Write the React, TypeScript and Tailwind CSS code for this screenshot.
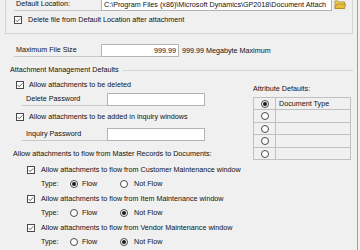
const Check = () => (
  <svg width="8" height="8" viewBox="0 0 8 8" className="block shrink-0">
    <rect x="0.5" y="0.5" width="7" height="7" fill="#fff" stroke="#4a4a4a" />
    <path d="M1.7 4.1 L3.2 5.6 L6.3 2.4" fill="none" stroke="#3a3a3a" strokeWidth="0.8" />
  </svg>
);

const Radio = ({ on }: { on?: boolean }) => (
  <svg width="8" height="8" viewBox="0 0 8 8" className="block shrink-0">
    <circle cx="4" cy="4" r="3.5" fill="#fff" stroke="#4a4a4a" />
    {on && <circle cx="4" cy="4" r="2" fill="#1a1a1a" />}
  </svg>
);

const Folder = () => (
  <svg width="14" height="13" viewBox="0 0 14 13" className="block">
    <rect x="0" y="0" width="14" height="13" fill="#ececec" />
    <path d="M2 4.5 L2 3 L5 3 L6 4 L11.5 4 L11.5 10.5 L2 10.5 Z" fill="#f3d35a" stroke="#a8862a" strokeWidth="0.8" />
    <path d="M2 10.5 L3.5 6 L12.5 6 L11.5 10.5 Z" fill="#e8bd3a" stroke="#a8862a" strokeWidth="0.8" />
  </svg>
);

const CheckRow = ({ label, pl, text }: { label: string; pl: string; text: string }) => (
  <div className={`flex items-center ${pl}`}>
    <Check />
    <span className={text}>{label}</span>
  </div>
);

const TypeRow = ({ flow }: { flow: boolean }) => (
  <div className="flex h-[14px] items-center pl-[41px]">
    <span className="w-[29px]">Type:</span>
    <Radio on={flow} />
    <span className="ml-[4px] w-[38px]">Flow</span>
    <Radio on={!flow} />
    <span className="ml-[6px]">Not Flow</span>
  </div>
);

const App = () => {
  return (
    <div className="flex h-[250px] w-[360px] overflow-hidden bg-[#f0f0f0] font-['Liberation_Sans',Arial,sans-serif] text-[7.2px] leading-none text-[#111]">
      <div className="flex w-[357px] flex-col">
        {/* default location group, top edge is scrolled off */}
        <div className="-mt-[2px] ml-[5px] h-[36px] w-[348px] shrink-0 border-x border-b border-[#d5d5d5]">
          <div className="flex h-[13px] items-stretch pl-[8px]">
            <div className="flex w-[87px] items-center border-b border-[#c8c8c8] pl-[2px]">Default Location:</div>
            <div className="flex w-[231px] items-center overflow-hidden whitespace-nowrap border border-[#b4b4b4] bg-white pl-[2px]">
              C:\Program Files (x86)\Microsoft Dynamics\GP2018\Document Attach
            </div>
            <div className="ml-[1px]">
              <Folder />
            </div>
          </div>
          <div className="mt-[3px] h-[12px]">
            <CheckRow pl="pl-[8px] h-[12px]" text="ml-[6px]" label="Delete file from Default Location after attachment" />
          </div>
        </div>

        <div className="mt-[10px] flex h-[13px] shrink-0 items-stretch pl-[14px]">
          <div className="flex w-[87px] items-center border-b border-[#c8c8c8] pl-[2px]">Maximum File Size</div>
          <div className="flex w-[78px] items-center justify-end border border-[#b4b4b4] bg-white pr-[2px]">999.99</div>
          <div className="ml-[3px] flex items-center">999.99 Megabyte Maximum</div>
        </div>

        <div className="mt-[8px] flex h-[10px] w-[353px] shrink-0 items-center pl-[10px]">
          <span>Attachment Management Defaults</span>
          <div className="ml-[4px] h-px flex-1 bg-[#d5d5d5]" />
        </div>

        <div className="flex flex-1">
          <div className="flex w-[253px] flex-col">
            <div className="mt-[3px] h-[13px]">
              <CheckRow pl="pl-[16px] h-[13px]" text="ml-[5px]" label="Allow attachments to be deleted" />
            </div>
            <div className="mt-[2px] flex h-[13px] items-stretch pl-[22px]">
              <div className="flex w-[85px] items-center border-b border-[#c8c8c8] pl-[4px]">Delete Password</div>
              <div className="w-[98px] border border-[#b4b4b4] bg-white" />
            </div>
            <div className="mt-[5px] h-[12px]">
              <CheckRow pl="pl-[16px] h-[12px]" text="ml-[5px]" label="Allow attachments to be added in inquiry windows" />
            </div>
            <div className="mt-[5px] flex h-[13px] items-stretch pl-[22px]">
              <div className="flex w-[85px] items-center border-b border-[#c8c8c8] pl-[4px]">Inquiry Password</div>
              <div className="w-[98px] border border-[#b4b4b4] bg-white" />
            </div>
            <div className="mt-[7px] flex h-[12px] items-center pl-[13px]">
              Allow attachments to flow from Master Records to Documents:
            </div>
            <div className="mt-[3px] h-[14px]">
              <CheckRow pl="pl-[27px] h-[14px]" text="ml-[6px]" label="Allow attachments to flow from Customer Maintenance window" />
            </div>
            <TypeRow flow={true} />
            <div className="h-[15px]">
              <CheckRow pl="pl-[27px] h-[15px]" text="ml-[6px]" label="Allow attachments to flow from Item Maintenance window" />
            </div>
            <TypeRow flow={false} />
            <div className="h-[15px]">
              <CheckRow pl="pl-[27px] h-[15px]" text="ml-[6px]" label="Allow attachments to flow from Vendor Maintenance window" />
            </div>
            <TypeRow flow={false} />
          </div>

          <div className="flex w-[98px] flex-col">
            <div className="mt-[9px] flex h-[10px] items-center">Attribute Defaults:</div>
            <div className="mt-[3px] border-l border-t border-[#c0c0c0]">
              {["Document Type", "", "", "", ""].map((t, i) => (
                <div
                  key={i}
                  className={`flex border-b border-r border-[#c0c0c0] ${i % 2 === 0 ? "h-[12px]" : "h-[13px]"}`}
                >
                  <div className="flex w-[22px] items-center justify-center border-r border-[#c0c0c0]">
                    <Radio on={i === 0} />
                  </div>
                  <div className="flex items-center pl-[3px]">{t}</div>
                </div>
              ))}
            </div>
          </div>
        </div>
      </div>
      <div className="h-full w-px bg-[#a0a0a0]" />
      <div className="h-full w-[2px] bg-[#f0f0f0]" />
    </div>
  );
};

export default App;
